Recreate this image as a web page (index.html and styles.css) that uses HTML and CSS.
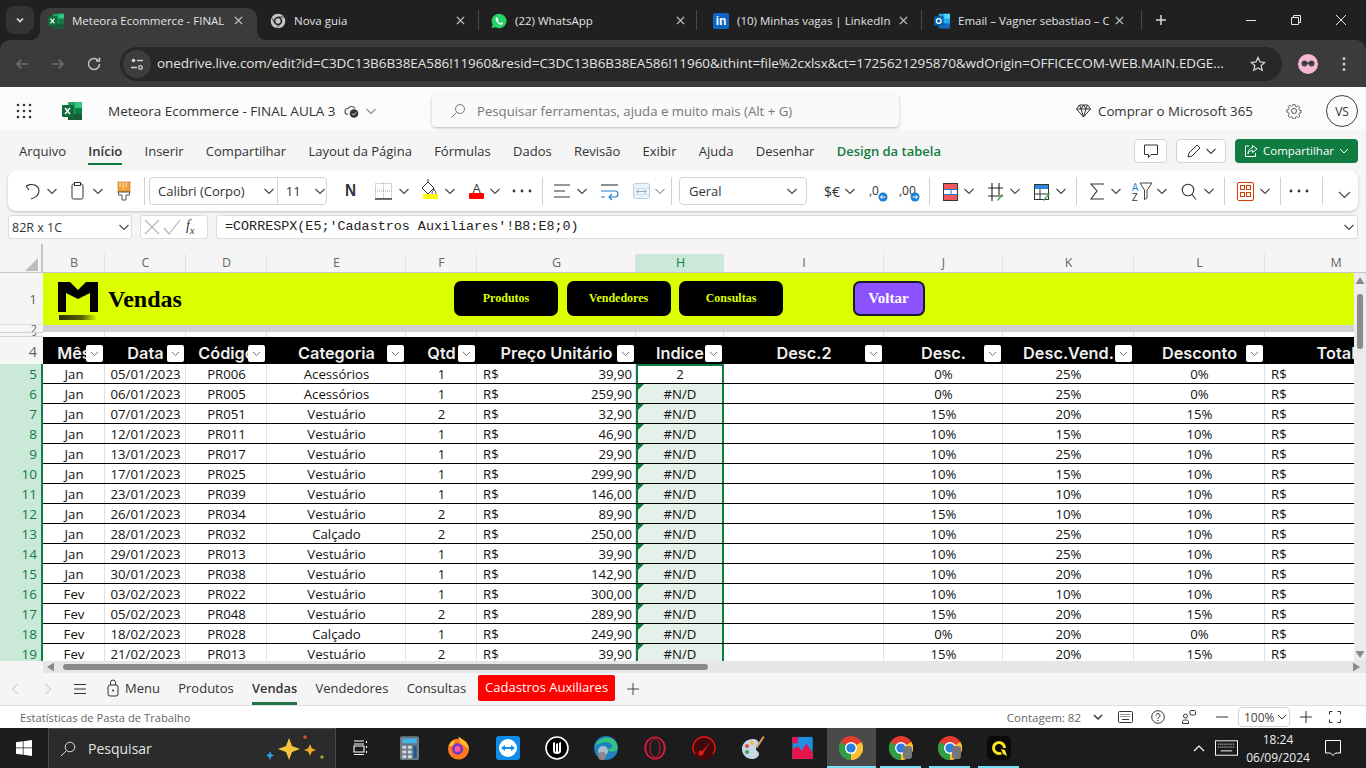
FILE: index.html
```html
<!DOCTYPE html>
<html lang="pt-BR">
<head>
<meta charset="utf-8">
<title>Meteora Ecommerce - FINAL AULA 3</title>
<link rel="stylesheet" href="styles.css">
</head>
<body>
<svg class="defs" width="0" height="0" aria-hidden="true">
  <symbol id="chev" viewBox="0 0 12 24"><path d="M1.500 10l4.500 4.500 4.500-4.500" fill="none" stroke="#444" stroke-width="1.100"/></symbol>
  <symbol id="close" viewBox="0 0 10 10"><path d="M1 1l8 8M9 1l-8 8" stroke="#c7c7c7" stroke-width="1.400" fill="none"/></symbol>
  <symbol id="xl" viewBox="0 0 20 20"><rect x="6" y="1" width="14" height="18" rx="1" fill="#21a366"/><rect x="13" y="1" width="7" height="6" fill="#33c481"/><rect x="13" y="7" width="7" height="6" fill="#107c41"/><rect x="6" y="13" width="14" height="6" fill="#185c37"/><rect x="0" y="4" width="12" height="12" rx="1" fill="#0f6d3a"/><path d="M3 7l5 6M8 7l-5 6" stroke="#fff" stroke-width="1.500"/></symbol>
  <symbol id="chrome" viewBox="0 0 24 24"><circle cx="12" cy="12" r="12" fill="#e33b2e"/><path d="M12 12L22.400 6A12 12 0 0 1 12 24Z" fill="#fbc02d"/><path d="M12 12L12 24A12 12 0 0 1 1.600 6Z" fill="#2f9e44"/><circle cx="12" cy="12" r="6" fill="#fff"/><circle cx="12" cy="12" r="4.600" fill="#2a7de1"/></symbol>
</svg>

<header class="tabstrip">
  <button class="tabmenu"><svg width="12" height="12" viewBox="0 0 12 12"><path d="M3 4.500l3 3 3-3" fill="none" stroke="#e3e3e3" stroke-width="1.600"/></svg></button>
  <div class="tab active">
    <svg class="fav" width="16" height="16"><use href="#xl"/></svg>
    <span class="tabtitle">Meteora Ecommerce - FINAL</span>
    <svg class="tabx" width="9" height="9"><use href="#close"/></svg>
  </div>
  <div class="tab t2">
    <svg class="fav" width="16" height="16" viewBox="0 0 24 24"><circle cx="12" cy="12" r="11" fill="#c4c7c5"/><circle cx="12" cy="12" r="6.400" fill="#202020"/><circle cx="12" cy="12" r="4" fill="#c4c7c5"/><path d="M12 6h10M7 15L2 6M15 16l-5 7" stroke="#202020" stroke-width="1.200"/></svg>
    <span class="tabtitle">Nova guia</span>
    <svg class="tabx" width="9" height="9"><use href="#close"/></svg>
  </div>
  <i class="tabsep"></i>
  <div class="tab t3">
    <svg class="fav" width="16" height="16" viewBox="0 0 24 24"><path d="M12 1a11 11 0 0 0-9.500 16.500L1 23l5.700-1.500A11 11 0 1 0 12 1z" fill="#25d366"/><path d="M8.300 6.500c-1.500 1-2 3-.5 5.500 1.500 3 4 5 6.500 5.700 2 .4 3.500-.8 3.700-2.300l-2.700-1.500-1.300 1.400c-1.700-.6-3.300-2.200-4-3.900l1.200-1.300-1.300-3z" fill="#fff"/></svg>
    <span class="tabtitle">(22) WhatsApp</span>
    <svg class="tabx" width="9" height="9"><use href="#close"/></svg>
  </div>
  <i class="tabsep"></i>
  <div class="tab t4">
    <span class="fav linkedin">in</span>
    <span class="tabtitle">(10) Minhas vagas | LinkedIn</span>
    <svg class="tabx" width="9" height="9"><use href="#close"/></svg>
  </div>
  <i class="tabsep"></i>
  <div class="tab t5">
    <svg class="fav" width="16" height="16" viewBox="0 0 20 20"><rect x="6" y="1" width="14" height="18" rx="1" fill="#28a8ea"/><rect x="13" y="1" width="7" height="6" fill="#50d9ff"/><rect x="6" y="13" width="14" height="6" fill="#0f6cbd"/><rect x="0" y="4" width="12" height="12" rx="1" fill="#0a5ea8"/><circle cx="6" cy="10" r="3" fill="none" stroke="#fff" stroke-width="1.600"/></svg>
    <span class="tabtitle">Email – Vagner sebastiao – C</span>
    <svg class="tabx" width="9" height="9"><use href="#close"/></svg>
  </div>
  <i class="tabsep"></i>
  <svg class="newtab" width="12" height="12" viewBox="0 0 12 12"><path d="M6 1v10M1 6h10" stroke="#d6d6d6" stroke-width="1.500"/></svg>
  <div class="winctl">
    <svg width="10" height="10" viewBox="0 0 10 10"><path d="M0 5.500h10" stroke="#e6e6e6"/></svg>
    <svg width="10" height="10" viewBox="0 0 10 10"><path d="M.5 2.500h7v7h-7zM2.500 2.500v-2h7v7h-2" fill="none" stroke="#e6e6e6"/></svg>
    <svg width="10" height="10" viewBox="0 0 10 10"><path d="M0 0l10 10M10 0L0 10" stroke="#e6e6e6"/></svg>
  </div>
</header>

<nav class="toolbar">
  <svg width="16" height="16" viewBox="0 0 16 16"><path d="M14 8H3M7.500 3.500L3 8l4.500 4.500" fill="none" stroke="#6e6e6e" stroke-width="1.500"/></svg>
  <svg class="navbtn" width="16" height="16" viewBox="0 0 16 16"><path d="M2 8h11M8.500 3.500L13 8l-4.500 4.500" fill="none" stroke="#6e6e6e" stroke-width="1.500"/></svg>
  <svg class="navbtn" width="16" height="16" viewBox="0 0 16 16"><path d="M13.500 8a5.500 5.500 0 1 1-1.600-3.900M13.500 1.500v3.500H10" fill="none" stroke="#c7c7c7" stroke-width="1.500"/></svg>
  <div class="omnibox">
    <span class="tune"><svg width="14" height="14" viewBox="0 0 14 14"><circle cx="3.500" cy="3.500" r="1.800" fill="#d0d0d0"/><path d="M7 3.500h6M1 10.500h6" stroke="#d0d0d0" stroke-width="1.400"/><circle cx="10.500" cy="10.500" r="1.800" fill="none" stroke="#d0d0d0" stroke-width="1.300"/></svg></span>
    <span class="url">onedrive.live.com/edit?id=C3DC13B6B38EA586!11960&amp;resid=C3DC13B6B38EA586!11960&amp;ithint=file%2cxlsx&amp;ct=1725621295870&amp;wdOrigin=OFFICECOM-WEB.MAIN.EDGE...</span>
    <svg class="star" width="16" height="16" viewBox="0 0 16 16"><path d="M8 1.500l2 4.400 4.700.5-3.500 3.200 1 4.700L8 11.900l-4.200 2.400 1-4.700L1.300 6.400 6 5.900z" fill="none" stroke="#d6d6d6" stroke-width="1.300"/></svg>
  </div>
  <svg class="avatar" width="20" height="20" viewBox="0 0 20 20"><circle cx="10" cy="10" r="10" fill="#f7b6d2"/><circle cx="6.500" cy="9.500" r="3" fill="#4a4a4a"/><circle cx="13.500" cy="9.500" r="3" fill="#4a4a4a"/><path d="M5 9h10" stroke="#222"/></svg>
  <svg class="kebab" width="4" height="16" viewBox="0 0 4 16"><circle cx="2" cy="2.500" r="1.500" fill="#c7c7c7"/><circle cx="2" cy="8" r="1.500" fill="#c7c7c7"/><circle cx="2" cy="13.500" r="1.500" fill="#c7c7c7"/></svg>
</nav>

<section class="apphead">
  <svg class="waffle" width="16" height="16" viewBox="0 0 16 16" fill="#333"><circle cx="2" cy="2" r="1.300"/><circle cx="8" cy="2" r="1.300"/><circle cx="14" cy="2" r="1.300"/><circle cx="2" cy="8" r="1.300"/><circle cx="8" cy="8" r="1.300"/><circle cx="14" cy="8" r="1.300"/><circle cx="2" cy="14" r="1.300"/><circle cx="8" cy="14" r="1.300"/><circle cx="14" cy="14" r="1.300"/></svg>
  <svg class="xlogo" width="20" height="20"><use href="#xl"/></svg>
  <span class="doctitle">Meteora Ecommerce - FINAL AULA 3</span>
  <svg class="cloud" width="15" height="14" viewBox="0 0 15 14"><path d="M4 10.500a3 3 0 0 1 0-6 4 4 0 0 1 7 0" fill="none" stroke="#555" stroke-width="1.100"/><circle cx="10" cy="9.500" r="4.300" fill="#333"/><path d="M8 9.500l1.500 1.500 2.500-2.500" stroke="#fff" fill="none"/></svg>
  <svg class="docchev" width="12" height="24"><use href="#chev"/></svg>
  <div class="searchbox">
    <svg width="16" height="16" viewBox="0 0 16 16"><circle cx="10" cy="6" r="4.500" fill="none" stroke="#777"/><path d="M6.500 9.500L1.500 14.500" stroke="#777"/></svg>
    <span>Pesquisar ferramentas, ajuda e muito mais (Alt + G)</span>
  </div>
  <svg class="gem" width="15" height="14" viewBox="0 0 15 14"><path d="M3.500 1h8l3 4-7 8-7-8zM.5 5h14M5 5l2.500 8L10 5M3.500 1L5 5l2.500-4L10 5l1.500-4" fill="none" stroke="#333" stroke-width="1"/></svg>
  <span class="buy">Comprar o Microsoft 365</span>
  <svg class="gear" width="16" height="16" viewBox="0 0 16 16"><circle cx="8" cy="8" r="2.500" fill="none" stroke="#555"/><path d="M6.800.8h2.400l.4 2 1.400.6 1.800-1.100 1.700 1.700-1.100 1.800.6 1.400 2 .4v2.400l-2 .4-.6 1.400 1.100 1.800-1.700 1.700-1.800-1.100-1.400.6-.4 2H6.800l-.4-2-1.400-.6-1.800 1.100-1.700-1.700L2.600 11 2 9.600l-2-.4V6.800l2-.4.600-1.400-1.100-1.800 1.700-1.700L5 2.600l1.400-.6z" fill="none" stroke="#555" transform="translate(.8 .8) scale(.9)"/></svg>
  <span class="user">VS</span>
</section>

<section class="ribbontabs">
  <span class="rt">Arquivo</span>
  <span class="rt on">Início</span>
  <span class="rt">Inserir</span>
  <span class="rt">Compartilhar</span>
  <span class="rt">Layout da Página</span>
  <span class="rt">Fórmulas</span>
  <span class="rt">Dados</span>
  <span class="rt">Revisão</span>
  <span class="rt">Exibir</span>
  <span class="rt">Ajuda</span>
  <span class="rt">Desenhar</span>
  <span class="rt design">Design da tabela</span>
  <div class="rtactions">
    <button class="rbtn comment"><svg width="16" height="16" viewBox="0 0 16 16"><path d="M1.500 2h13v9.500H8l-2.500 3v-3h-4z" fill="none" stroke="#333" stroke-linejoin="round"/></svg></button>
    <button class="rbtn edit"><svg width="16" height="16" viewBox="0 0 16 16"><path d="M2 14l1-4 8-8 3 3-8 8z" fill="none" stroke="#333"/></svg><svg width="12" height="24"><use href="#chev"/></svg></button>
    <button class="share"><svg width="14" height="14" viewBox="0 0 14 14"><path d="M5 2H1.500v10.500h10V9M8.500 1.500L13 5 8.500 8.500V6.500C6 6.500 4.500 8 4 10c0-3 1.500-6 4.500-6z" fill="none" stroke="#fff"/></svg><span>Compartilhar</span><svg width="10" height="10" viewBox="0 0 10 10"><path d="M1 3l4 4 4-4" fill="none" stroke="#fff"/></svg></button>
  </div>
</section>

<section class="ribbon">
  <svg width="26" height="28" viewBox="0 0 26 28"><path d="M6 9l3 4M6 9l5-1.500M6 9c6-3 13-1 13 5 0 4-4 7-8 8" fill="none" stroke="#333" stroke-width="1.100"/></svg>
  <svg class="c"><use href="#chev"/></svg>
  <svg width="34" height="28" viewBox="0 0 34 28"><rect x="14" y="7" width="11" height="15" rx="1.500" fill="none" stroke="#333"/><rect x="16.500" y="5.500" width="6" height="3" fill="#fff" stroke="#333"/></svg>
  <svg class="c"><use href="#chev"/></svg>
  <svg width="35" height="28" viewBox="0 0 35 28"><rect x="14" y="5" width="12" height="10" fill="#f7a13a" stroke="#a96a10" stroke-width=".6"/><path d="M16 5v5M19 5v7M22 5v5" stroke="#fff" stroke-width=".7"/><path d="M14.500 15h11v3h-3.500v5h-4v-5h-3.500z" fill="#fff" stroke="#555"/></svg>
  <i class="sep"></i>
  <div class="combo fontbox">
    <span class="fname">Calibri (Corpo)</span><svg class="c"><use href="#chev"/></svg>
    <span class="fsize">11</span><svg class="c"><use href="#chev"/></svg>
  </div>
  <span class="bold">N</span>
  <svg width="33" height="28" viewBox="0 0 33 28"><rect x="10.500" y="6.500" width="16" height="15" fill="none" stroke="#aaa" stroke-dasharray="1 1"/><path d="M18.500 6v16M10 14h17" stroke="#aaa" stroke-dasharray="1 1"/><path d="M10 22h17" stroke="#222" stroke-width="1.300"/></svg>
  <svg class="c"><use href="#chev"/></svg>
  <svg width="34" height="28" viewBox="0 0 34 28"><path d="M18 2v4" stroke="#333"/><path d="M18 5l6 6-6 6-6-6z" fill="none" stroke="#333"/><path d="M24 12c1 2 2 3 2 4a2 2 0 0 1-4 0c0-1 1-2 2-4z" fill="none" stroke="#333" stroke-width=".9"/><rect x="13" y="17" width="15" height="5" fill="#ffff00"/></svg>
  <svg class="c"><use href="#chev"/></svg>
  <svg width="33" height="28" viewBox="0 0 33 28"><text x="20.500" y="15.500" class="atext">A</text><rect x="13" y="16" width="15" height="6" rx="1" fill="#ff0000"/></svg>
  <svg class="c"><use href="#chev"/></svg>
  <svg width="36" height="28" viewBox="0 0 36 28" fill="#333"><circle cx="13" cy="14" r="1.400"/><circle cx="21" cy="14" r="1.400"/><circle cx="29" cy="14" r="1.400"/></svg>
  <i class="sep"></i>
  <svg width="33" height="28" viewBox="0 0 33 28"><path d="M11 8h16M11 14h11M11 20h16" stroke="#333" stroke-width="1.100"/></svg>
  <svg class="c"><use href="#chev"/></svg>
  <svg width="37" height="28" viewBox="0 0 37 28"><path d="M13 8h17" stroke="#333" stroke-width="1.100"/><path d="M13 14h14a3 3 0 0 1 0 6h-6M24 17l-3 3 3 3M13 20h4" fill="none" stroke="#1b7fd4" stroke-width="1.100"/></svg>
  <svg width="29" height="28" viewBox="0 0 29 28"><rect x="8.500" y="6.500" width="16" height="15" rx="2" fill="#eaf4fb" stroke="#b5cfe0"/><path d="M9 11.500h15M9 17.500h15" stroke="#cfe2ee"/><path d="M12 14.500h9M13.500 12.500l-2 2 2 2M19.500 12.500l2 2-2 2" fill="none" stroke="#8fb1c9"/></svg>
  <svg class="c dim"><use href="#chev"/></svg>
  <i class="sep"></i>
  <div class="combo numbox"><span class="fmt">Geral</span><svg class="c"><use href="#chev"/></svg></div>
  <span class="cur">$€</span>
  <svg class="c"><use href="#chev"/></svg>
  <svg width="36" height="28" viewBox="0 0 36 28"><text x="13" y="18" class="dec">,0</text><circle cx="27" cy="20" r="4.500" fill="#1b7fd4"/><path d="M29.500 20h-5M26.500 18l-2 2 2 2" stroke="#fff" fill="none"/></svg>
  <svg width="32" height="28" viewBox="0 0 32 28"><text x="7" y="18" class="dec">,00</text><circle cx="23" cy="20" r="4.500" fill="#1b7fd4"/><path d="M20.500 20h5M23.500 18l2 2-2 2" stroke="#fff" fill="none"/></svg>
  <i class="sep"></i>
  <svg width="33" height="28" viewBox="0 0 33 28"><rect x="13.500" y="6.500" width="14" height="17" fill="#fff" stroke="#333"/><path d="M14 7h13v5H14zM14 18h13v5H14z" fill="#f05a5a"/><path d="M13.500 12.500h14M13.500 17.500h14M21 12v6" stroke="#1b7fd4"/></svg>
  <svg class="c"><use href="#chev"/></svg>
  <svg width="34" height="28" viewBox="0 0 34 28"><path d="M13 11h15M13 19h15M17 6v18M24 6v12" stroke="#222" stroke-width="1.100"/><path d="M23 24l5-6-1-1-5 6z" fill="#3aa655"/></svg>
  <svg class="c"><use href="#chev"/></svg>
  <svg width="34" height="28" viewBox="0 0 34 28"><rect x="13.500" y="7.500" width="14" height="15" fill="#fff" stroke="#333"/><path d="M14 8h13v4H14z" fill="#2b88d8"/><path d="M13.500 17h14M19 12v11" stroke="#333"/><path d="M23 24l6-7-1-1-6 7z" fill="#3aa655"/></svg>
  <svg class="c"><use href="#chev"/></svg>
  <i class="sep wide"></i>
  <svg width="33" height="28" viewBox="0 0 33 28"><path d="M27 7H14l6 7-6 8h13" fill="none" stroke="#333" stroke-width="1.100"/></svg>
  <svg class="c"><use href="#chev"/></svg>
  <svg width="34" height="28" viewBox="0 0 34 28"><text x="10" y="14" class="sorta">A</text><text x="10" y="24" class="sortz">Z</text><path d="M18 6h12l-5 7v8l-2.500 1.500V13z" fill="none" stroke="#444"/></svg>
  <svg class="c"><use href="#chev"/></svg>
  <svg width="35" height="28" viewBox="0 0 35 28"><circle cx="20" cy="13" r="5.800" fill="none" stroke="#333" stroke-width="1.100"/><path d="M24 17.500l4 5" stroke="#333" stroke-width="1.100"/></svg>
  <svg class="c"><use href="#chev"/></svg>
  <i class="sep wide"></i>
  <svg width="34" height="28" viewBox="0 0 34 28"><rect x="12.500" y="5.500" width="16" height="18" rx="1.500" fill="none" stroke="#d83b01"/><rect x="15.500" y="8.500" width="4" height="4" fill="none" stroke="#d83b01"/><rect x="21.500" y="8.500" width="4" height="4" fill="none" stroke="#d83b01"/><rect x="15.500" y="15.500" width="4" height="4" fill="none" stroke="#d83b01"/><rect x="21.500" y="15.500" width="4" height="4" fill="none" stroke="#d83b01"/></svg>
  <svg class="c"><use href="#chev"/></svg>
  <i class="sep wide"></i>
  <svg width="36" height="28" viewBox="0 0 36 28" fill="#333"><circle cx="10" cy="14" r="1.400"/><circle cx="18" cy="14" r="1.400"/><circle cx="26" cy="14" r="1.400"/></svg>
  <i class="sep"></i>
  <svg class="lastchev" width="33" height="28" viewBox="0 0 33 28"><path d="M16 15l5.500 5.500 5.500-5.500" fill="none" stroke="#444" stroke-width="1.100"/></svg>
</section>

<section class="formulabar">
  <div class="namebox"><span>82R x 1C</span><svg class="c"><use href="#chev"/></svg></div>
  <div class="fxbox">
    <svg width="20" height="20" viewBox="0 0 20 20"><path d="M3 3l14 14M17 3L3 17" stroke="#b5b5b5" stroke-width="1.200"/></svg>
    <svg width="20" height="20" viewBox="0 0 20 20"><path d="M2 11l5 6L18 3" fill="none" stroke="#b5b5b5" stroke-width="1.200"/></svg>
    <span class="fx">f<sub>x</sub></span>
  </div>
  <div class="formula"><span>=CORRESPX(E5;'Cadastros Auxiliares'!B8:E8;0)</span><svg class="c"><use href="#chev"/></svg></div>
</section>

<section class="colheads">
  <div class="corner"><svg width="14" height="14" viewBox="0 0 14 14"><path d="M14 1v13H1z" fill="#bdbdbd"/></svg></div>
  <div class="cols">
    <span>B</span><span>C</span><span>D</span><span>E</span><span>F</span><span>G</span><span class="current">H</span><span>I</span><span>J</span><span>K</span><span>L</span><span>M</span>
  </div>
</section>

<section class="gridarea">
  <div class="rowheads">
    <span class="rh r1">1</span><span class="rh r2">2</span><span class="rh r3">3</span><span class="rh r4">4</span>
    <span class="rh on">5</span><span class="rh on">6</span><span class="rh on">7</span><span class="rh on">8</span><span class="rh on">9</span><span class="rh on">10</span><span class="rh on">11</span><span class="rh on">12</span><span class="rh on">13</span><span class="rh on">14</span><span class="rh on">15</span><span class="rh on">16</span><span class="rh on">17</span><span class="rh on">18</span><span class="rh on">19</span>
  </div>
  <div class="sheet">
    <div class="banner">
      <svg class="mlogo" width="40" height="40" viewBox="0 0 40 40">
        <defs><linearGradient id="fade" x1="0" x2="1"><stop offset="0" stop-color="#2c2c00"/><stop offset=".6" stop-color="#5a6000"/><stop offset="1" stop-color="#5a6000" stop-opacity="0"/></linearGradient></defs>
        <path d="M0 0H12L20 8 28 0H40V30H32V11L20 17 8 11V30H0Z" fill="#000"/><rect x="1" y="33" width="38" height="5" fill="url(#fade)"/>
      </svg>
      <span class="sheettitle">Vendas</span>
      <span class="sbtn">Produtos</span>
      <span class="sbtn">Vendedores</span>
      <span class="sbtn">Consultas</span>
      <span class="voltar">Voltar</span>
    </div>
    <div class="band"></div>
    <div class="row spacer"><span></span><span></span><span></span><span></span><span></span><span></span><span></span><span></span><span></span><span></span><span></span><span></span></div>
    <div class="row thead">
      <span>Mês<i class="fb"><svg width="9" height="9" viewBox="0 0 9 9"><path d="M1 3l3.500 3.500L8 3" fill="none" stroke="#777"/></svg></i></span>
      <span>Data<i class="fb"><svg width="9" height="9" viewBox="0 0 9 9"><path d="M1 3l3.500 3.500L8 3" fill="none" stroke="#777"/></svg></i></span>
      <span>Código<i class="fb"><svg width="9" height="9" viewBox="0 0 9 9"><path d="M1 3l3.500 3.500L8 3" fill="none" stroke="#777"/></svg></i></span>
      <span>Categoria<i class="fb"><svg width="9" height="9" viewBox="0 0 9 9"><path d="M1 3l3.500 3.500L8 3" fill="none" stroke="#777"/></svg></i></span>
      <span>Qtd<i class="fb"><svg width="9" height="9" viewBox="0 0 9 9"><path d="M1 3l3.500 3.500L8 3" fill="none" stroke="#777"/></svg></i></span>
      <span>Preço Unitário<i class="fb"><svg width="9" height="9" viewBox="0 0 9 9"><path d="M1 3l3.500 3.500L8 3" fill="none" stroke="#777"/></svg></i></span>
      <span>Indice<i class="fb"><svg width="9" height="9" viewBox="0 0 9 9"><path d="M1 3l3.500 3.500L8 3" fill="none" stroke="#777"/></svg></i></span>
      <span>Desc.2<i class="fb"><svg width="9" height="9" viewBox="0 0 9 9"><path d="M1 3l3.500 3.500L8 3" fill="none" stroke="#777"/></svg></i></span>
      <span>Desc.<i class="fb"><svg width="9" height="9" viewBox="0 0 9 9"><path d="M1 3l3.500 3.500L8 3" fill="none" stroke="#777"/></svg></i></span>
      <span>Desc.Vend.<i class="fb"><svg width="9" height="9" viewBox="0 0 9 9"><path d="M1 3l3.500 3.500L8 3" fill="none" stroke="#777"/></svg></i></span>
      <span>Desconto<i class="fb"><svg width="9" height="9" viewBox="0 0 9 9"><path d="M1 3l3.500 3.500L8 3" fill="none" stroke="#777"/></svg></i></span>
      <span>Total</span>
    </div>
    <div class="row"><span>Jan</span><span>05/01/2023</span><span>PR006</span><span>Acessórios</span><span>1</span><span class="money"><i>R$</i><i>39,90</i></span><span class="sel first">2</span><span></span><span>0%</span><span>25%</span><span>0%</span><span class="money"><i>R$</i></span></div>
    <div class="row"><span>Jan</span><span>06/01/2023</span><span>PR005</span><span>Acessórios</span><span>1</span><span class="money"><i>R$</i><i>259,90</i></span><span class="sel na">#N/D</span><span></span><span>0%</span><span>25%</span><span>0%</span><span class="money"><i>R$</i></span></div>
    <div class="row"><span>Jan</span><span>07/01/2023</span><span>PR051</span><span>Vestuário</span><span>2</span><span class="money"><i>R$</i><i>32,90</i></span><span class="sel na">#N/D</span><span></span><span>15%</span><span>20%</span><span>15%</span><span class="money"><i>R$</i></span></div>
    <div class="row"><span>Jan</span><span>12/01/2023</span><span>PR011</span><span>Vestuário</span><span>1</span><span class="money"><i>R$</i><i>46,90</i></span><span class="sel na">#N/D</span><span></span><span>10%</span><span>15%</span><span>10%</span><span class="money"><i>R$</i></span></div>
    <div class="row"><span>Jan</span><span>13/01/2023</span><span>PR017</span><span>Vestuário</span><span>1</span><span class="money"><i>R$</i><i>29,90</i></span><span class="sel na">#N/D</span><span></span><span>10%</span><span>25%</span><span>10%</span><span class="money"><i>R$</i></span></div>
    <div class="row"><span>Jan</span><span>17/01/2023</span><span>PR025</span><span>Vestuário</span><span>1</span><span class="money"><i>R$</i><i>299,90</i></span><span class="sel na">#N/D</span><span></span><span>10%</span><span>15%</span><span>10%</span><span class="money"><i>R$</i></span></div>
    <div class="row"><span>Jan</span><span>23/01/2023</span><span>PR039</span><span>Vestuário</span><span>1</span><span class="money"><i>R$</i><i>146,00</i></span><span class="sel na">#N/D</span><span></span><span>10%</span><span>10%</span><span>10%</span><span class="money"><i>R$</i></span></div>
    <div class="row"><span>Jan</span><span>26/01/2023</span><span>PR034</span><span>Vestuário</span><span>2</span><span class="money"><i>R$</i><i>89,90</i></span><span class="sel na">#N/D</span><span></span><span>15%</span><span>10%</span><span>10%</span><span class="money"><i>R$</i></span></div>
    <div class="row"><span>Jan</span><span>28/01/2023</span><span>PR032</span><span>Calçado</span><span>2</span><span class="money"><i>R$</i><i>250,00</i></span><span class="sel na">#N/D</span><span></span><span>10%</span><span>25%</span><span>10%</span><span class="money"><i>R$</i></span></div>
    <div class="row"><span>Jan</span><span>29/01/2023</span><span>PR013</span><span>Vestuário</span><span>1</span><span class="money"><i>R$</i><i>39,90</i></span><span class="sel na">#N/D</span><span></span><span>10%</span><span>25%</span><span>10%</span><span class="money"><i>R$</i></span></div>
    <div class="row"><span>Jan</span><span>30/01/2023</span><span>PR038</span><span>Vestuário</span><span>1</span><span class="money"><i>R$</i><i>142,90</i></span><span class="sel na">#N/D</span><span></span><span>10%</span><span>20%</span><span>10%</span><span class="money"><i>R$</i></span></div>
    <div class="row"><span>Fev</span><span>03/02/2023</span><span>PR022</span><span>Vestuário</span><span>1</span><span class="money"><i>R$</i><i>300,00</i></span><span class="sel na">#N/D</span><span></span><span>10%</span><span>10%</span><span>10%</span><span class="money"><i>R$</i></span></div>
    <div class="row"><span>Fev</span><span>05/02/2023</span><span>PR048</span><span>Vestuário</span><span>2</span><span class="money"><i>R$</i><i>289,90</i></span><span class="sel na">#N/D</span><span></span><span>15%</span><span>20%</span><span>15%</span><span class="money"><i>R$</i></span></div>
    <div class="row"><span>Fev</span><span>18/02/2023</span><span>PR028</span><span>Calçado</span><span>1</span><span class="money"><i>R$</i><i>249,90</i></span><span class="sel na">#N/D</span><span></span><span>0%</span><span>20%</span><span>0%</span><span class="money"><i>R$</i></span></div>
    <div class="row"><span>Fev</span><span>21/02/2023</span><span>PR013</span><span>Vestuário</span><span>2</span><span class="money"><i>R$</i><i>39,90</i></span><span class="sel na">#N/D</span><span></span><span>15%</span><span>20%</span><span>15%</span><span class="money"><i>R$</i></span></div>
  </div>
  <div class="vscroll">
    <svg width="12" height="8" viewBox="0 0 12 8"><path d="M6 0l4.500 7h-9z" fill="#8a8a8a"/></svg>
    <i class="vthumb"></i>
    <svg class="vdown" width="12" height="8" viewBox="0 0 12 8"><path d="M6 8L1.500 1h9z" fill="#8a8a8a"/></svg>
  </div>
</section>

<section class="hscrollrow">
  <div class="hscroll">
    <svg width="8" height="12" viewBox="0 0 8 12"><path d="M0 6l7-4.500v9z" fill="#8a8a8a"/></svg>
    <i class="hthumb"></i>
    <svg class="hright" width="8" height="12" viewBox="0 0 8 12"><path d="M8 6L1 1.500v9z" fill="#8a8a8a"/></svg>
  </div>
</section>

<section class="sheettabs">
  <svg class="navp" width="8" height="12" viewBox="0 0 8 12"><path d="M6.500 1L1.500 6l5 5" fill="none" stroke="#bdbdbd"/></svg>
  <svg class="navn" width="8" height="12" viewBox="0 0 8 12"><path d="M1.500 1l5 5-5 5" fill="none" stroke="#bdbdbd"/></svg>
  <svg class="ham" width="14" height="12" viewBox="0 0 14 12"><path d="M1 1.500h12M1 6h12M1 10.500h12" stroke="#333" stroke-width="1.100"/></svg>
  <span class="st menu"><svg width="12" height="18" viewBox="0 0 12 18"><rect x="1" y="6" width="10" height="11" rx="2" fill="none" stroke="#333"/><path d="M3.500 6V3.500a2.500 2.500 0 0 1 5 0V6" fill="none" stroke="#333"/><circle cx="6" cy="11.500" r="1" fill="#333"/></svg>Menu</span>
  <span class="st">Produtos</span>
  <span class="st on">Vendas</span>
  <span class="st">Vendedores</span>
  <span class="st">Consultas</span>
  <span class="st red">Cadastros Auxiliares</span>
  <svg class="addsheet" width="12" height="12" viewBox="0 0 12 12"><path d="M6 0v12M0 6h12" stroke="#444"/></svg>
</section>

<footer class="statusbar">
  <span class="stats">Estatísticas de Pasta de Trabalho</span>
  <div class="statusright">
    <span class="count">Contagem: 82</span>
    <svg width="10" height="10" viewBox="0 0 10 10"><path d="M1 3l4 4 4-4" fill="none" stroke="#333" stroke-width="1.500"/></svg>
    <svg class="kbd" width="15" height="12" viewBox="0 0 15 12"><rect x=".5" y=".5" width="14" height="11" rx="1" fill="none" stroke="#333"/><path d="M2.500 3.500h10M2.500 5.500h10" stroke="#333" stroke-dasharray="1 1"/><path d="M4 8.500h7" stroke="#333"/></svg>
    <svg class="help" width="14" height="14" viewBox="0 0 14 14"><circle cx="7" cy="7" r="6.300" fill="none" stroke="#333"/><path d="M5 5.500a2 2 0 1 1 3 1.700c-.7.400-1 .8-1 1.500" fill="none" stroke="#333"/><circle cx="7" cy="10.500" r=".7" fill="#333"/></svg>
    <svg class="fback" width="14" height="14" viewBox="0 0 14 14"><rect x="8" y=".5" width="5.500" height="4.500" rx="1" fill="none" stroke="#333"/><circle cx="3.500" cy="6" r="2" fill="none" stroke="#333"/><path d="M.5 13.500v-2c0-1 1-1.500 3-1.500s3 .5 3 1.500v2z" fill="none" stroke="#333"/></svg>
    <svg class="zminus" width="12" height="12" viewBox="0 0 12 12"><path d="M0 6h12" stroke="#333"/></svg>
    <div class="zoomsel"><span>100%</span><svg width="10" height="10" viewBox="0 0 10 10"><path d="M1 3l4 4 4-4" fill="none" stroke="#333"/></svg></div>
    <svg class="zplus" width="12" height="12" viewBox="0 0 12 12"><path d="M6 0v12M0 6h12" stroke="#333"/></svg>
    <svg class="expand" width="12" height="12" viewBox="0 0 12 12"><path d="M.5 3.500v-3h3M8.500.5h3v3M11.500 8.500v3h-3M3.500 11.500h-3v-3" fill="none" stroke="#333"/></svg>
  </div>
</footer>

<footer class="taskbar">
  <svg class="win" width="16" height="16" viewBox="0 0 16 16" fill="#fff"><path d="M0 2.300l6.800-1v6.300H0zM7.500 1.200L16 0v7.600H7.500zM0 8.300h6.800v6.400L0 13.700zM7.500 8.300H16V16l-8.500-1.200z"/></svg>
  <div class="tsearch">
    <svg width="16" height="16" viewBox="0 0 16 16"><circle cx="10" cy="6" r="4.800" fill="none" stroke="#ddd"/><path d="M6.500 9.500l-5.500 5.500" stroke="#ddd"/></svg>
    <span>Pesquisar</span>
    <svg class="sparkle" width="62" height="30" viewBox="0 0 62 30"><path d="M24 4l3 8 8 3-8 3-3 8-3-8-8-3 8-3z" fill="#f8c33c"/><path d="M45 10l1.800 4.200L51 16l-4.200 1.800L45 22l-1.800-4.200L39 16l4.200-1.800z" fill="#f0a72a"/><path d="M5 17l1.300 3L9 21.500l-2.700 1.300L5 26l-1.300-3.200L1 21.500l2.700-1.500z" fill="#2d9fe6"/><circle cx="40" cy="3" r="1.800" fill="#d6552b"/><circle cx="57" cy="23" r="1.800" fill="#8aa83a"/></svg>
  </div>
  <div class="apps">
    <span class="app"><svg width="16" height="16" viewBox="0 0 16 16"><path d="M1 1h10M1 4h10M1 6h10v6H1zM1 14.500h10M13.500 1v2M13.500 6v2M13.500 11v2" fill="none" stroke="#fff" stroke-width="1.100"/></svg></span>
    <span class="app"><svg width="19" height="24" viewBox="0 0 24 30"><rect x="0" y="0" width="24" height="30" rx="2" fill="#6d7880"/><rect x="3" y="3" width="18" height="6" fill="#3fb4e6"/><path d="M3 12h5v4H3zM10 12h5v4h-5zM3 18h5v4H3zM10 18h5v4h-5zM3 24h5v4H3zM10 24h5v4h-5z" fill="#cfd8de"/><rect x="17" y="12" width="4" height="16" fill="#1c5a94"/></svg></span>
    <span class="app"><svg width="23" height="24" viewBox="0 0 24 24"><circle cx="12" cy="13" r="11" fill="#ff7a1a"/><path d="M12 0c4 3 9 6 11 13L14 7z" fill="#ffbf2c"/><path d="M2 10c2-4 4-6 6-6l-2 6z" fill="#ffcf3a"/><circle cx="11" cy="13" r="6" fill="#7a35c9"/><circle cx="11" cy="13" r="3" fill="#ff5a9b"/></svg></span>
    <span class="app"><svg width="24" height="24" viewBox="0 0 24 24"><rect width="24" height="24" rx="3" fill="#0e8ee9"/><circle cx="12" cy="12" r="9" fill="#fff"/><path d="M5 12l4-3v2h6V9l4 3-4 3v-2H9v2z" fill="#0e8ee9"/></svg></span>
    <span class="app"><svg width="24" height="24" viewBox="0 0 24 24"><circle cx="12" cy="12" r="11" fill="#000" stroke="#fff" stroke-width="1.600"/><path d="M8 7v8c0 2 1.500 3 4 3s4-1 4-3V6l-2 1v8l-1 1V7l-2 1v8l-1-1V6z" fill="#fff"/></svg></span>
    <span class="app"><svg width="24" height="24" viewBox="0 0 24 24"><circle cx="12" cy="12" r="12" fill="#1e7fc2"/><path d="M1 10C3 3 12-1 19 3c4 3 5 7 4 11-3 3-9 2-10-1 3 0 5-1 5-3 0-4-9-6-17 0z" fill="#35c27f"/><circle cx="9" cy="15" r="5" fill="#a8bcc7"/><circle cx="8" cy="20" r="4" fill="#888"/></svg></span>
    <span class="app"><svg width="24" height="24" viewBox="0 0 24 26"><ellipse cx="12" cy="13" rx="11.500" ry="12.500" fill="#e01a3c"/><ellipse cx="12" cy="13" rx="9.500" ry="11" fill="#1d1d1d"/><ellipse cx="12" cy="13" rx="5.500" ry="10" fill="none" stroke="#e01a3c"/></svg></span>
    <span class="app"><svg width="24" height="26" viewBox="0 0 24 26"><circle cx="12" cy="13" r="12" fill="#400a0a"/><path d="M3 19a11 11 0 1 1 18 0" fill="none" stroke="#e81818" stroke-width="1.500"/><path d="M6 21L19 6l-9 14z" fill="#e81818"/><circle cx="9" cy="18" r="2.500" fill="#e81818"/></svg></span>
    <span class="app"><svg width="24" height="26" viewBox="0 0 24 26"><path d="M1 14c0-6 5-10 11-10 3 0 6 2 6 5 0 2-3 2-3 5 0 2 3 2 3 5s-4 5-7 5c-5 0-10-4-10-10z" fill="#c6d8e8"/><circle cx="6" cy="11" r="2" fill="#e8483b"/><circle cx="11" cy="8" r="2" fill="#f2b632"/><circle cx="6" cy="17" r="2" fill="#3aa655"/><path d="M22 1l1.500 1-7 11-2-1z" fill="#d9a066"/></svg></span>
    <span class="app"><svg width="23" height="24" viewBox="0 0 24 26"><rect x="1" y="1" width="22" height="24" fill="#1f8fe3"/><rect x="1" y="1" width="6" height="7" fill="#e8144b"/><path d="M1 25V14l6-3 4 5 5-8 7 10v7z" fill="#e8144b"/></svg></span>
    <span class="app current"><svg width="24" height="24"><use href="#chrome"/></svg></span>
    <span class="app"><svg width="24" height="24"><use href="#chrome"/></svg><i class="badge"></i></span>
    <span class="app"><svg width="24" height="24"><use href="#chrome"/></svg><i class="badge"></i></span>
    <span class="app"><svg width="24" height="24" viewBox="0 0 24 24"><rect width="24" height="24" rx="5" fill="#0a0a0a"/><path d="M12 5a7 7 0 1 0 3 13.300l-1.500-2.600A4 4 0 1 1 16 12h3a7 7 0 0 0-7-7z" fill="#f5e61e"/><path d="M14 13l4 1 2 6-4-2z" fill="#f5e61e"/></svg></span>
  </div>
  <div class="tray">
    <svg width="12" height="8" viewBox="0 0 12 8"><path d="M1 7l5-5 5 5" fill="none" stroke="#fff" stroke-width="1.200"/></svg>
    <svg class="tkbd" width="23" height="16" viewBox="0 0 24 16"><rect x=".5" y=".5" width="23" height="15" fill="none" stroke="#fff"/><path d="M3 4h18M3 7h18" stroke="#fff" stroke-dasharray="1 1"/><path d="M6 11h12" stroke="#fff"/></svg>
    <div class="clock"><span>18:24</span><span>06/09/2024</span></div>
    <svg class="notif" width="16" height="16" viewBox="0 0 16 16"><path d="M.5.500h15v12.500h-5L8 15.500 5.500 13h-5z" fill="none" stroke="#fff"/></svg>
  </div>
</footer>
</body>
</html>
```
FILE: styles.css
```css
* { box-sizing: border-box; }
html, body { margin: 0; padding: 0; }
body {
  width: 1366px; height: 768px; overflow: hidden;
  display: flex; flex-direction: column;
  background: linear-gradient(#202020 50px, #f5f5f5 50px);
  font-family: "Open Sans", "Liberation Sans", sans-serif;
  color: #333;
}
.defs { position: absolute; }
button { font: inherit; padding: 0; }
i { font-style: normal; }
svg { display: block; flex: none; }
svg.c { width: 12px; height: 24px; }

/* browser tabs */
.tabstrip {
  height: 40px; background: #202020; display: flex; align-items: flex-end;
  color: #e3e3e3; font-size: 11.5px; flex: none; position: relative;
}
.tabmenu {
  width: 28px; height: 28px; margin: 0 6px 6px 6px; border: 0; border-radius: 8px;
  background: #333; display: flex; align-items: center; justify-content: center;
}
.tab { height: 32px; display: flex; align-items: center; padding: 0 14px 7px 13px; position: relative; }
.tab.active { width: 217px; padding-left: 8px; background: #3b3b3b; border-radius: 10px 10px 0 0; padding-bottom: 7px; }
.tab.active::before, .tab.active::after {
  content: ""; position: absolute; bottom: 0; width: 10px; height: 10px;
}
.tab.active::before { left: -10px; background: radial-gradient(circle at 0 0, #202020 10px, #3b3b3b 10.5px); }
.tab.active::after { right: -10px; background: radial-gradient(circle at 100% 0, #202020 10px, #3b3b3b 10.5px); }
.tab.t2 { width: 222px; padding-left: 13px; }
.tab.t3 { width: 218px; padding-left: 12px; padding-right: 12px; }
.tab.t4 { width: 225px; padding-left: 16px; }
.tab.t5 { width: 220px; padding-left: 12px; padding-right: 18px; }
.fav { flex: none; margin-right: 8px; }
.linkedin {
  width: 16px; height: 16px; background: #0a66c2; color: #fff; border-radius: 2px;
  font: 700 12px/16px "Liberation Sans", sans-serif; text-align: center;
}
.tabtitle { flex: 1; white-space: nowrap; overflow: hidden; font-size: 11.5px; }
.tabx { margin-left: 6px; }
.tabsep { width: 1px; height: 20px; background: #4a4a4a; margin-bottom: 10px; flex: none; margin-left: -1px; }
.newtab { margin: 0 0 14px 13px; }
.winctl { margin-left: auto; display: flex; gap: 35px; padding: 0 20px 15px 0; }

/* address bar */
.toolbar {
  height: 47px; flex: none; background: #3b3b3b; display: flex; align-items: center; padding-left: 14px;
  border-radius: 10px 10px 0 0;
}
.navbtn { margin-left: 20px; }
.omnibox {
  width: 1162px; height: 34px; margin-left: 18px; background: #282828; border-radius: 17px;
  display: flex; align-items: center; padding: 0 16px 0 3px; color: #e3e3e3;
}
.tune {
  width: 28px; height: 28px; border-radius: 50%; background: #3d3d3d;
  display: flex; align-items: center; justify-content: center; flex: none;
}
.url { margin-left: 6px; font-size: 13.5px; line-height: 17px; margin-top: -1px; white-space: nowrap; overflow: hidden; flex: 1; letter-spacing: -.06px; }
.star { margin-left: 8px; }
.avatar { margin-left: 16px; }
.kebab { margin-left: 24px; }

/* app header */
.apphead { height: 43px; flex: none; background: #fbfbfb; display: flex; align-items: center; padding: 5px 0 0 16px; }
.xlogo { margin-left: 30px; }
.doctitle { margin-left: 26px; font-size: 13.5px; white-space: nowrap; width: 236px; }
.cloud { flex: none; }
.docchev { margin-left: 6px; opacity: .6; }
.searchbox {
  width: 467px; height: 32px; margin-left: 55px; background: #fafafa; border-radius: 4px;
  box-shadow: 0 1px 3px rgba(0,0,0,.25); display: flex; align-items: center; padding-left: 18px; gap: 11px;
  color: #777; font-size: 13.2px; white-space: nowrap;
}
.gem { margin-left: 177px; }
.buy { margin-left: 7px; font-size: 13.3px; width: 167px; white-space: nowrap; }
.gear { margin-left: 21px; }
.user {
  width: 32px; height: 32px; margin-left: 24px; border: 1px solid #444; border-radius: 50%;
  display: flex; align-items: center; justify-content: center; font-size: 12px;
}

/* ribbon tabs */
.ribbontabs {
  height: 41px; flex: none; background: #f5f5f5; display: flex; align-items: center;
  padding-left: 19px; gap: 22.3px; font-size: 13px; position: relative;
}
.rt { position: relative; white-space: nowrap; }
.rt.on { font-weight: 600; }
.rt.on::after { content: ""; position: absolute; left: 0; right: 0; bottom: -5px; height: 2px; background: #107c41; }
.rt.design { color: #107c41; font-weight: 600; }
.rtactions { margin-left: auto; display: flex; gap: 9px; padding-right: 8px; }
.rbtn {
  height: 24px; background: #fff; border: 1px solid #d4d4d4; border-radius: 4px;
  display: flex; align-items: center; justify-content: center;
}
.comment { width: 33px; }
.edit { width: 50px; gap: 3px; }
.share {
  width: 123px; height: 24px; background: #107c41; color: #fff; border: 0; border-radius: 4px;
  display: flex; align-items: center; justify-content: center; gap: 5px; font-size: 11.5px;
}

/* ribbon */
.ribbon {
  height: 40px; flex: none; margin: 0 8px; padding-left: 12px; background: #fff; border-radius: 8px;
  box-shadow: 0 1px 3px rgba(0,0,0,.22); display: flex; align-items: center;
}
.sep { width: 1px; height: 28px; background: #d0d0d0; margin-left: 5px; flex: none; }
.sep.wide { margin-left: 9px; }
.combo {
  height: 28px; background: #fff; border: 1px solid #d4d4d4; border-radius: 4px; display: flex; align-items: center;
  font-size: 13px;
}
.fontbox { width: 178px; margin-left: 4px; }
.numbox { width: 128px; margin-left: 7px; padding-left: 9px; justify-content: space-between; padding-right: 8px; }
.fname { width: 116px; padding-left: 8px; white-space: nowrap; }
.fsize { width: 38px; margin-left: 2px; border-left: 1px solid #d4d4d4; padding-left: 8px; line-height: 26px; }
.bold { width: 38px; padding-left: 18px; font: 700 17px "Liberation Sans", sans-serif; transform: scaleX(.9); }
.dim { opacity: .5; }
.atext { font: 13px "Open Sans", sans-serif; fill: #333; text-anchor: middle; }
.cur { width: 37px; padding-left: 17px; font-size: 14px; }
.dec { font: 12px "Open Sans", sans-serif; fill: #333; }
.sorta { font: 10px "Open Sans", sans-serif; fill: #1b7fd4; }
.sortz { font: 10px "Open Sans", sans-serif; fill: #333; }

/* formula bar */
.formulabar { height: 24px; flex: none; margin-top: 4px; padding: 0 8px; display: flex; gap: 8px; }
.namebox, .fxbox, .formula {
  height: 24px; background: #fff; border-radius: 3px; box-shadow: 0 0 0 1px #dcdcdc inset; display: flex; align-items: center;
}
.namebox { width: 124px; justify-content: space-between; padding: 0 2px 0 4px; font-size: 12.5px; }
.fxbox { width: 68px; padding-left: 2px; gap: 0; }
.fx { font: italic 14px "Liberation Serif", serif; margin-left: 4px; }
.fx sub { font-size: 10px; }
.formula { flex: 1; justify-content: space-between; padding: 0 3px 0 9px; font: 13.4px/22px "Liberation Mono", monospace; color: #222; }

/* column headers */
.colheads { height: 28px; flex: none; margin-top: 6px; display: flex; align-items: flex-end; border-bottom: 1px solid #c6c6c6; position: relative; }
.corner { width: 43px; height: 28px; border-right: 2px solid #c6c6c6; display: flex; align-items: flex-end; justify-content: flex-end; padding: 0 3px 1px 0; flex: none; }
.cols {
  display: grid; grid-template-columns: 62px 81px 81px 139px 71px 159px 88px 160px 119px 131px 131px 142px;
  height: 18px; width: 1323px; overflow: hidden; flex: none;
}
.cols span { text-align: center; font-size: 12.5px; line-height: 18px; color: #666; border-right: 1px solid #e1e1e1; padding-left: 1px; }
.cols .current { background: #cbe9d9; color: #107c41; box-shadow: 0 -1px 0 #cbe9d9; border-right: 0; border-bottom: 2px solid #107c41; }

/* sheet */
.gridarea { height: 388px; flex: none; display: flex; overflow: hidden; background: #fff; }
.rowheads { width: 43px; flex: none; background: #f5f5f5; display: flex; flex-direction: column; }
.rh {
  height: 20px; flex: none; text-align: right; padding-right: 6px; font-size: 13.5px; line-height: 20px; color: #666;
  overflow: hidden;
}
.r1 { height: 52px; line-height: 52px; border-bottom: 1px solid #e1e1e1; }
.r2 { height: 7px; line-height: 7px; font-size: 11px; }
.r3 { height: 5px; line-height: 5px; font-size: 11px; border-top: 1px solid #d4d4d4; border-bottom: 1px solid #d4d4d4; }
.r4 { height: 27px; line-height: 29px; font-size: 14.5px; }
.rh.on { background: #cbe9d9; color: #107c41; border-right: 2px solid #107c41; padding-right: 4px; }
.sheet { width: 1311px; flex: none; overflow: hidden; }
.banner { height: 52px; background: #dcff00; display: flex; align-items: center; padding-left: 15px; }
.mlogo { margin-top: 6px; }
.sheettitle { width: 346px; margin-left: 10px; font: 700 24px "Liberation Serif", serif; color: #000; flex: none; }
.sbtn {
  width: 104px; height: 35px; margin: -1px 8.5px 0 0; background: #000; color: #dcff00; border-radius: 7px;
  font: 700 12px/35px "Liberation Serif", serif; text-align: center; flex: none;
}
.voltar {
  width: 72px; height: 35px; margin: -1px 0 0 61px; background: #8c52ff; color: #fff; border: 2px solid #1a1a2e; border-radius: 7px;
  font: 700 15px/30px "Liberation Serif", serif; text-align: center; flex: none;
}
.band { height: 7px; background: #d0d0d0; }
.row {
  display: grid; grid-template-columns: 62px 81px 81px 139px 71px 159px 88px 160px 119px 131px 131px 142px;
  width: 1364px; height: 20px; font-size: 13.2px; color: #111; border-bottom: 1px solid #000;
}
.row > span { border-right: 1px solid #e0e0e0; text-align: center; line-height: 20px; padding-left: 1px; white-space: nowrap; overflow: hidden; position: relative; }
.row.spacer { height: 5px; border: 0; }
.row.thead {
  height: 27px; background: #000; color: #eee; border: 0;
  font: 600 16.3px/31px "Inter", sans-serif;
}
.row.thead > span { border: 0; line-height: 32px; padding-left: 0; }
.fb {
  position: absolute; right: 2px; top: 8px; width: 17px; height: 17px; background: #fff; border-radius: 2px;
  display: flex; align-items: center; justify-content: center;
}
.row > .money { display: flex; justify-content: space-between; padding: 0 3px 0 6px; }
.row > .sel { border-left: 2px solid #107c41; border-right: 2px solid #107c41; padding-left: 0; }
.sel.first { box-shadow: inset 0 2px 0 #107c41; }
.sel.na { background: #e6f0ea; }
.sel.na::before {
  content: ""; position: absolute; left: 0; top: 0; width: 0; height: 0;
  border-top: 6px solid #107c41; border-right: 6px solid transparent;
}
.vscroll { flex: 1; background: #ececec; display: flex; flex-direction: column; align-items: center; padding-top: 4px; position: relative; width: 12px; }
.vthumb { width: 6px; height: 55px; margin-top: 9px; border-radius: 3px; background: #8a8a8a; }
.vdown { margin-top: auto; margin-bottom: 3px; }

.hscrollrow { height: 12px; flex: none; padding-left: 43px; }
.hscroll { height: 12px; background: #e6e6e6; width: 1323px; display: flex; align-items: center; padding-left: 4px; }
.hthumb { width: 645px; height: 6px; margin-left: 8px; border-radius: 3px; background: #8a8a8a; }
.hright { margin-left: auto; margin-right: 6px; }

/* sheet tabs */
.sheettabs { height: 33px; flex: none; display: flex; align-items: center; border-bottom: 1px solid #dedede; font-size: 13px; padding-left: 11px; position: relative; }
.navn { margin-left: 25px; }
.ham { margin-left: 21px; }
.st { height: 32px; line-height: 29px; white-space: nowrap; margin-left: 18.3px; display: flex; align-items: center; gap: 6px; position: relative; padding-bottom: 2px; }
.menu { margin-left: 20px; }
.st.on { font-weight: 600; font-size: 12.8px; }
.st.on::after { content: ""; position: absolute; left: 0; right: 0; bottom: 0; height: 3px; background: #217346; }
.st.red { background: #ff0000; color: #fff; height: 26px; padding: 0 7px 1px; border-radius: 2px; margin: -3px 0 0 12px; }
.addsheet { margin-left: 12px; }

/* status bar */
.statusbar { height: 22px; flex: none; background: #fff; display: flex; align-items: center; padding-left: 20px; font-size: 11.2px; color: #666; }
.statusright { margin-left: auto; display: flex; align-items: center; padding-right: 25px; }
.count { font-size: 11.5px; margin-right: 12px; }
.kbd { margin-left: 15px; }
.help { margin-left: 18px; }
.fback { margin-left: 17px; }
.zminus { margin-left: 20px; }
.zoomsel { width: 52px; height: 20px; margin-left: 10px; border: 1px solid #d0d0d0; border-radius: 4px; display: flex; align-items: center; justify-content: space-between; padding: 0 2px 0 5px; color: #444; font-size: 12px; }
.zplus { margin-left: 10px; }
.expand { margin-left: 17px; }

/* taskbar */
.taskbar { height: 40px; flex: none; background: #1c1c1c; display: flex; align-items: center; color: #fff; padding-left: 16px; }
.tsearch {
  width: 288px; height: 40px; margin-left: 16px; background: #2b2b2b; border: 1px solid #4a4a4a; border-bottom: 0;
  display: flex; align-items: center; padding-left: 11px; font-size: 14px; color: #e4e4e4;
}
.tsearch span { margin-left: 12px; }
.sparkle { margin-left: auto; margin-right: 8px; }
.apps { display: flex; margin-left: 0; }
.app { width: 49.1px; height: 40px; display: flex; align-items: center; justify-content: center; position: relative; flex: none; }
.app.current { background: #4a4a4a; }
.app:nth-child(n+11)::after { content: ""; position: absolute; left: 4px; right: 4px; bottom: 0; height: 2px; background: #76e0f8; }
.app.current::after { left: 0; right: 0; }
.badge { position: absolute; left: 27px; top: 18px; width: 9px; height: 13px; border-radius: 3px; background: #777; }
.tray { margin-left: auto; display: flex; align-items: center; padding-right: 25px; }
.tkbd { margin-left: 10px; }
.clock { width: 60px; margin-left: 10px; display: flex; flex-direction: column; align-items: center; gap: 3px; font-size: 12px; line-height: 15px; color: #eee; white-space: nowrap; }
.notif { margin-left: 17px; }
```
